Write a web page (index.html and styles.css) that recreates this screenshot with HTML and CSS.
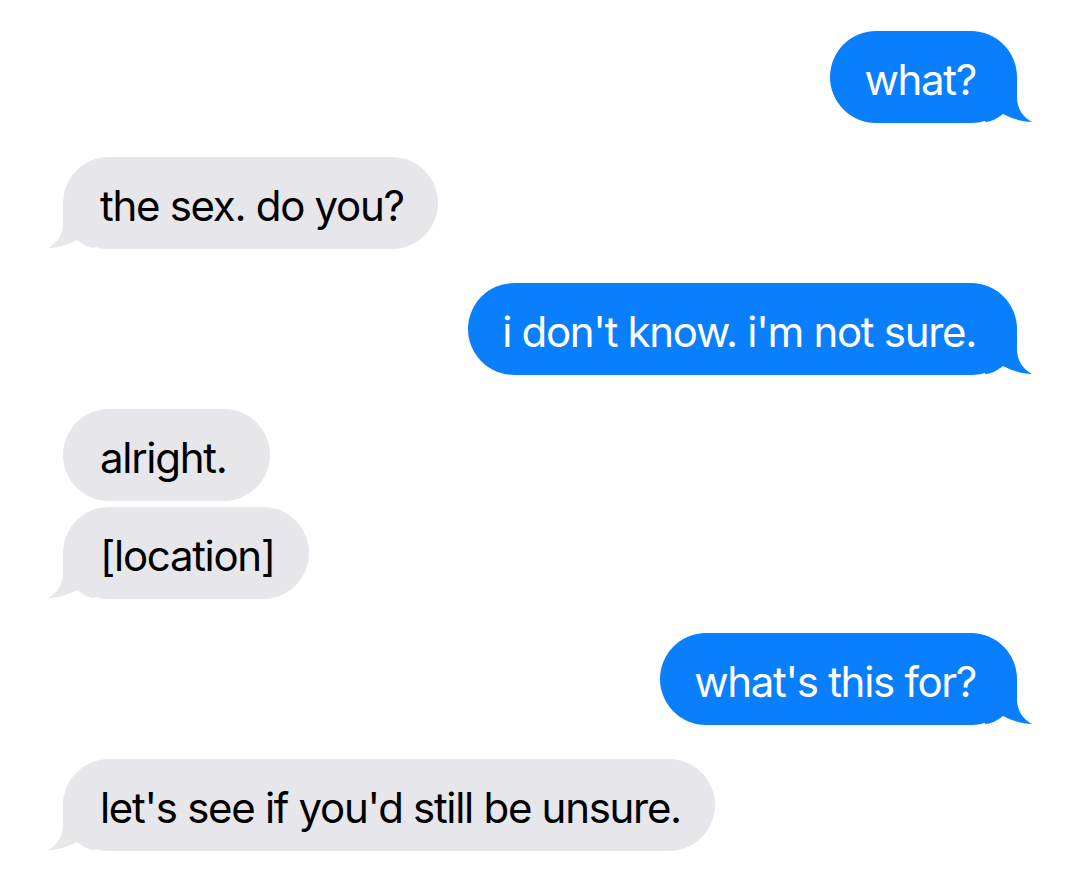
FILE: index.html
```html
<!DOCTYPE html>
<html lang="en">
<head>
    <meta charset="UTF-8">
    <meta name="viewport" content="width=device-width, initial-scale=1.0">
    <title>Messages</title>
    <link rel="stylesheet" href="styles.css">
</head>
<body>

<div class="thread">
    <div class="msg sent">
        <div class="bubble">what?
            <svg class="tail" viewBox="0 0 50 46"><path d="M0 0 L32 0 L32 20 C32 32 38 40 47 45 C38 45 28 42 18 37 C12 42 5 45 0 45 Z"/></svg>
        </div>
    </div>

    <div class="msg received">
        <div class="bubble">the sex. do you?
            <svg class="tail" viewBox="0 0 50 46"><path d="M0 0 L32 0 L32 20 C32 32 38 40 47 45 C38 45 28 42 18 37 C12 42 5 45 0 45 Z"/></svg>
        </div>
    </div>

    <div class="msg sent">
        <div class="bubble">i don't know. i'm not sure.
            <svg class="tail" viewBox="0 0 50 46"><path d="M0 0 L32 0 L32 20 C32 32 38 40 47 45 C38 45 28 42 18 37 C12 42 5 45 0 45 Z"/></svg>
        </div>
    </div>

    <div class="msg received group">
        <div class="bubble short">alright.</div>
        <div class="bubble">[location]
            <svg class="tail" viewBox="0 0 50 46"><path d="M0 0 L32 0 L32 20 C32 32 38 40 47 45 C38 45 28 42 18 37 C12 42 5 45 0 45 Z"/></svg>
        </div>
    </div>

    <div class="msg sent">
        <div class="bubble">what's this for?
            <svg class="tail" viewBox="0 0 50 46"><path d="M0 0 L32 0 L32 20 C32 32 38 40 47 45 C38 45 28 42 18 37 C12 42 5 45 0 45 Z"/></svg>
        </div>
    </div>

    <div class="msg received">
        <div class="bubble">let's see if you'd still be unsure.
            <svg class="tail" viewBox="0 0 50 46"><path d="M0 0 L32 0 L32 20 C32 32 38 40 47 45 C38 45 28 42 18 37 C12 42 5 45 0 45 Z"/></svg>
        </div>
    </div>
</div>

</body>
</html>
```

FILE: styles.css
```css
body {
    margin: 0;
    background-color: #ffffff;
    font-family: Inter, "Noto Sans", sans-serif;
}

.thread {
    display: flex;
    flex-direction: column;
    gap: 34px;
    padding: 31px 63px 0 63px;
}

.msg {
    display: flex;
    flex-direction: column;
    gap: 6px;
}

.sent {
    align-items: flex-end;
}

.received {
    align-items: flex-start;
}

.bubble {
    position: relative;
    height: 92px;
    box-sizing: border-box;
    padding-top: 5px;
    line-height: 87px;
    font-size: 42px;
    letter-spacing: -1.3px;
    border-radius: 46px;
    white-space: nowrap;
}

.sent .bubble {
    background-color: #0a7ffe;
    color: #ffffff;
    padding-left: 34px;
    padding-right: 41px;
}

.received .bubble {
    background-color: #e6e6eb;
    color: #000000;
    padding-left: 37px;
    padding-right: 34px;
}

.received .short {
    padding-right: 44px;
}

.tail {
    position: absolute;
    bottom: 0;
    width: 50px;
    height: 46px;
}

.sent .tail {
    right: -18px;
    fill: #0a7ffe;
}

.received .tail {
    left: -18px;
    fill: #e6e6eb;
    transform: scaleX(-1);
}
```
